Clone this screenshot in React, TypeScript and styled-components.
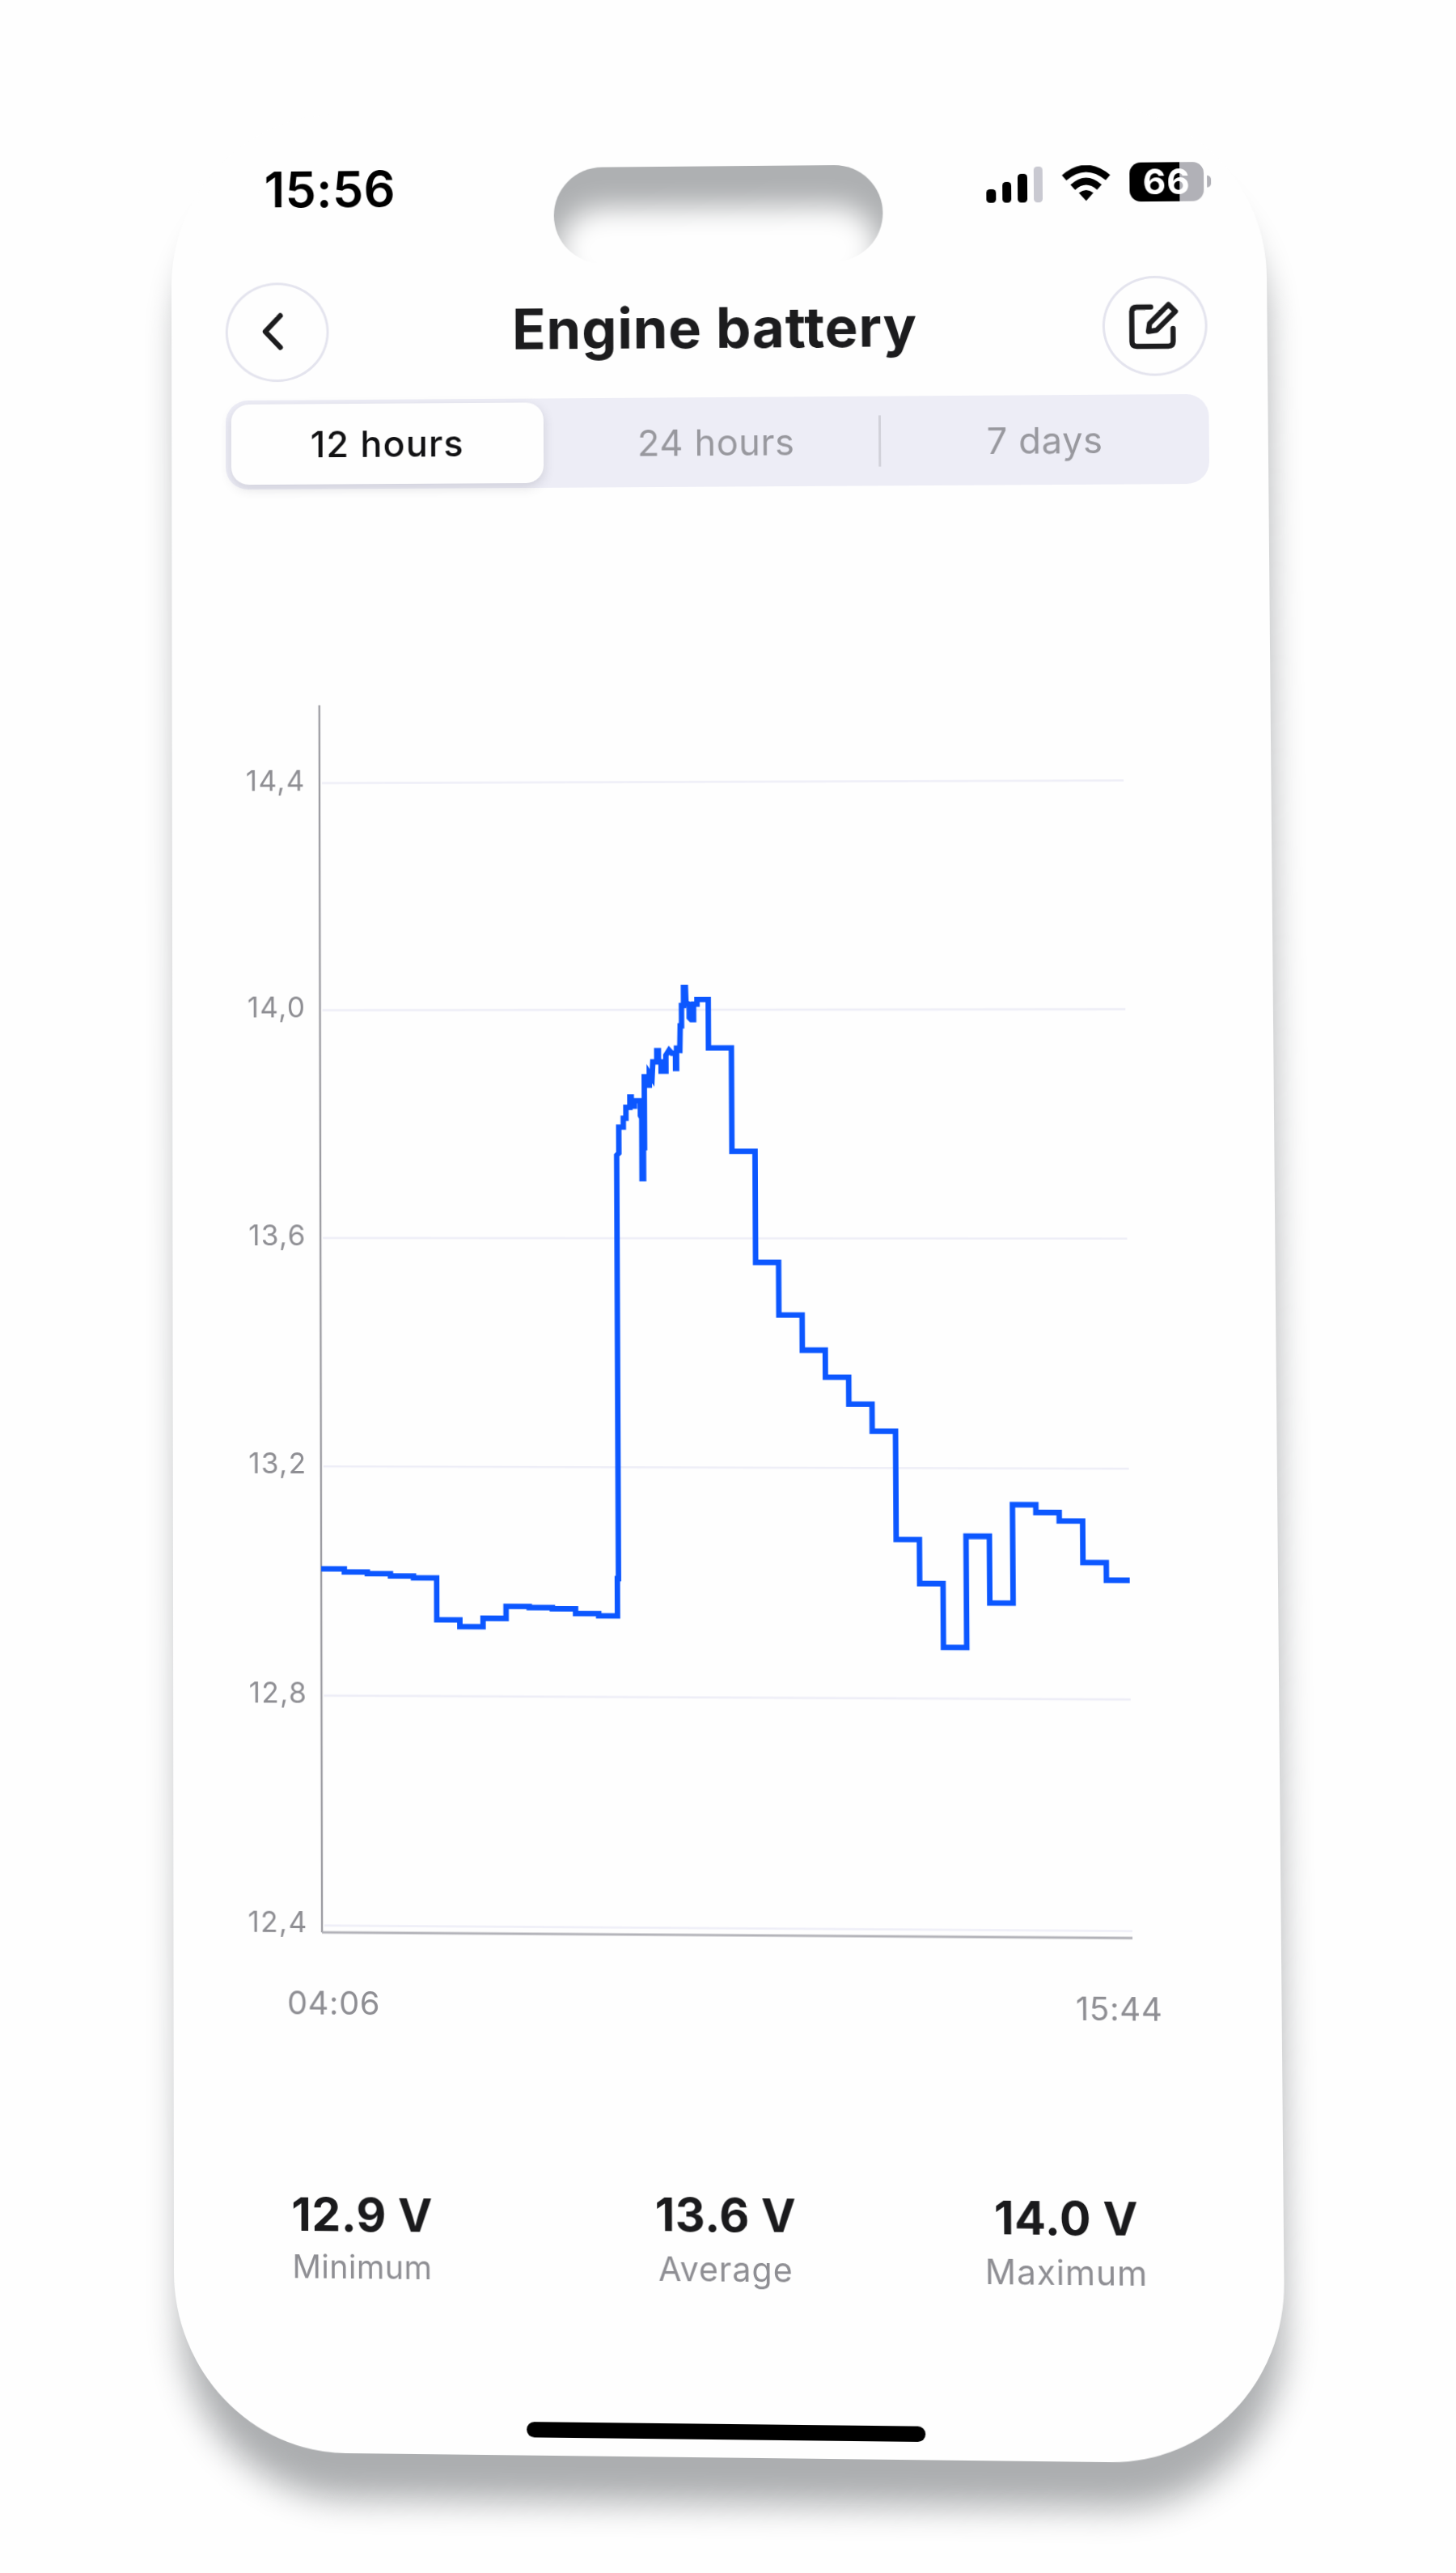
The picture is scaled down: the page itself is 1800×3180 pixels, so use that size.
import React from 'react';
import styled, { createGlobalStyle } from 'styled-components';

type Point = [number, number];

const SCREEN_WIDTH = 1368;
const SCREEN_HEIGHT = 2906;
const TILT_TOP = 360;

/* Page corners (clockwise from top left) of the screen area below TILT_TOP. */
const CORNERS: Point[] = [
  [212.2, 495.6],
  [1567.3, 486.4],
  [1589.4, 3045.6],
  [215.3, 3029.5],
];

function tiltMatrix(w: number, h: number, [p0, p1, p2, p3]: Point[]) {
  const dx1 = p1[0] - p2[0];
  const dy1 = p1[1] - p2[1];
  const dx2 = p3[0] - p2[0];
  const dy2 = p3[1] - p2[1];
  const sx = p0[0] - p1[0] + p2[0] - p3[0];
  const sy = p0[1] - p1[1] + p2[1] - p3[1];
  const det = dx1 * dy2 - dx2 * dy1;
  const g = (sx * dy2 - dx2 * sy) / det;
  const k = (dx1 * sy - sx * dy1) / det;
  const m = [
    (p1[0] - p0[0] + g * p1[0]) / w, (p1[1] - p0[1] + g * p1[1]) / w, 0, g / w,
    (p3[0] - p0[0] + k * p3[0]) / h, (p3[1] - p0[1] + k * p3[1]) / h, 0, k / h,
    0, 0, 1, 0,
    p0[0], p0[1], 0, 1,
  ];
  return `matrix3d(${m.map((n) => n.toFixed(12)).join(',')})`;
}

const TILT = tiltMatrix(SCREEN_WIDTH, SCREEN_HEIGHT - TILT_TOP, CORNERS);

const GlobalStyle = createGlobalStyle`
  body {
    margin: 0;
    background: #fefefe;
    font-family: Inter, 'Liberation Sans', sans-serif;
    -webkit-font-smoothing: antialiased;
  }
`;

const Page = styled.main`
  width: 1800px;
  height: 3180px;
  overflow: hidden;
  background: #fefefe;
`;

const Phone = styled.section`
  box-sizing: border-box;
  width: ${SCREEN_WIDTH}px;
  height: ${SCREEN_HEIGHT}px;
  display: flex;
  flex-direction: column;
  background: #fefefe;
  border-radius: 210px 210px 213px 213px / 215px 215px 220px 220px;
  box-shadow: 4px 61px 42px -5px #acaeb0;
  transform-origin: 0 0;
  transform: ${TILT} translateY(-${TILT_TOP}px);
`;

const StatusBar = styled.div`
  box-sizing: border-box;
  height: 212px;
  padding: 70px 77px 0 117px;
  display: grid;
  grid-template-columns: 1fr 411px 1fr;
  column-gap: 0;
  align-items: start;
`;

const Clock = styled.time`
  font-size: 62px;
  font-weight: 600;
  line-height: 50px;
  letter-spacing: 0.3px;
  color: #000;
`;

const Island = styled.div`
  height: 121px;
  margin-left: -18px;
  margin-right: 18px;
  border-radius: 61px;
  box-shadow: inset 0 45px 34px 6px #aeb0b2;
`;

const StatusIcons = styled.div`
  display: flex;
  align-items: flex-end;
  justify-content: flex-end;
  height: 49px;
`;

const Signal = styled.div`
  display: flex;
  align-items: flex-end;
  gap: 8px;
  margin-right: 23px;
`;

const SignalBar = styled.span<{ $height: number; $off?: boolean }>`
  width: 11.5px;
  height: ${(p) => p.$height}px;
  border-radius: 4.5px;
  background: ${(p) => (p.$off ? '#c9c9d1' : '#000')};
`;

const WifiIcon = styled.svg`
  width: 62px;
  height: 45px;
  margin-right: 23px;
  margin-bottom: 1px;
`;

const Battery = styled.div`
  width: 92px;
  height: 49px;
  border-radius: 14px;
  background: linear-gradient(90deg, #000 67%, #b1b1b7 67%);
  color: #fff;
  font-size: 44px;
  font-weight: 700;
  line-height: 49px;
  letter-spacing: 1px;
  text-align: center;
`;

const BatteryTip = styled.span`
  width: 5px;
  height: 15px;
  margin: 0 -9px 17px 4px;
  border-radius: 0 5px 5px 0;
  background: #b1b1b7;
`;

const Header = styled.header`
  display: flex;
  align-items: center;
  justify-content: space-between;
  height: 125px;
  padding: 0 74px 0 68px;
`;

const RoundButton = styled.button`
  box-sizing: border-box;
  width: 130px;
  height: 125px;
  padding: 0;
  border: 3px solid #e4e4ee;
  border-radius: 50%;
  background: transparent;
  display: flex;
  align-items: center;
  justify-content: center;
`;

const ButtonIcon = styled.svg`
  flex: none;
  overflow: visible;
  fill: none;
  stroke: #1c1c1e;
  stroke-width: 6.4;
  stroke-linecap: round;
  stroke-linejoin: round;
`;

const Title = styled.h1`
  margin: 0 0 4px;
  font-size: 69.5px;
  font-weight: 680;
  line-height: 80px;
  letter-spacing: 0.8px;
  color: #1c1c1e;
`;

const Tabs = styled.nav`
  box-sizing: border-box;
  height: 112px;
  margin: 23px 73px 0 68px;
  display: grid;
  grid-template-columns: repeat(3, 1fr);
  border-radius: 28px;
  background: #ededf6;
`;

const Tab = styled.button<{ $active?: boolean; $divided?: boolean }>`
  margin: ${(p) => (p.$active ? '5px 10px 6px 7px' : '0 -2px 0 0')};
  padding: 0;
  border: 0;
  border-radius: 22px;
  background: ${(p) =>
    p.$active
      ? '#fefefe'
      : p.$divided
        ? 'linear-gradient(#d1d1d9, #d1d1d9) right 0 center / 3px 64px no-repeat'
        : 'transparent'};
  box-shadow: ${(p) => (p.$active ? '0 5px 14px rgba(60, 60, 80, 0.17)' : 'none')};
  color: ${(p) => (p.$active ? '#111113' : '#98989e')};
  font-family: inherit;
  font-size: 45.5px;
  font-weight: ${(p) => (p.$active ? 520 : 400)};
  letter-spacing: ${(p) => (p.$active ? '1.2px' : '0.6px')};
`;

const ChartArea = styled.div`
  display: grid;
  grid-template-columns: 167.5px 1001px;
  column-gap: 17.5px;
  margin-top: 271px;
  height: 1524px;
`;

const VoltAxis = styled.div`
  display: flex;
  flex-direction: column;
  align-items: flex-end;
  padding-top: 72.5px;
`;

const VoltLabel = styled.span`
  height: 283.6px;
  line-height: 44px;
  font-size: 35.5px;
  letter-spacing: 1.4px;
  color: #8e8e93;
`;

const Plot = styled.svg`
  width: 1001px;
  height: 1524px;
  overflow: visible;
`;

const TimeRow = styled.div`
  display: flex;
  justify-content: space-between;
  margin-top: 62px;
  padding: 0 145.5px 0 141.5px;
  font-size: 40px;
  letter-spacing: 0.6px;
  line-height: 50px;
  color: #8e8e93;
`;

const Stats = styled.div`
  display: grid;
  grid-template-columns: 450px 449px 388px;
  height: 123px;
  margin-top: 198px;
  padding-left: 9px;
`;

const Stat = styled.div<{ $top: number; $gap: number }>`
  display: flex;
  flex-direction: column;
  align-items: center;
  gap: ${(p) => p.$gap}px;
  padding-top: ${(p) => p.$top}px;
`;

const StatValue = styled.strong`
  font-size: 57px;
  font-weight: 680;
  line-height: 66px;
  letter-spacing: 0.6px;
  color: #1a1a1c;
`;

const StatLabel = styled.span<{ $size: number; $tracking: number }>`
  font-size: ${(p) => p.$size}px;
  letter-spacing: ${(p) => p.$tracking}px;
  line-height: 48px;
  color: #8e8e93;
`;

const HomeIndicator = styled.div`
  width: 491px;
  height: 19.5px;
  margin: 164.5px auto 0;
  border-radius: 10px;
  background: #000;
  translate: -2px 0;
`;

/* Chart space: one sampling interval across, 0.4 V = 283.6 units down. */
const STEP = 28.75;
const VOLT = 709;
const LINE_144 = 97.5;
const TICKS = [14.4, 14.0, 13.6, 13.2, 12.8, 12.4];

const yOf = (volts: number) => LINE_144 + (14.4 - volts) * VOLT;

/* [interval at which the reading starts, volts] */
const BEFORE: Point[] = [
  [0, 13.021], [1, 13.016], [2, 13.013], [3, 13.009], [4, 13.006], [5, 12.933],
  [6, 12.9215], [7, 12.936], [8, 12.957], [9, 12.955], [10, 12.953], [11, 12.945],
  [12, 12.941], [12.81, 13.006], [12.86, 13.745],
];

const AFTER: Point[] = [
  [16.85, 13.933], [17.84, 13.752], [18.84, 13.558], [19.83, 13.466], [20.83, 13.405],
  [21.82, 13.358], [22.82, 13.311], [23.82, 13.264], [24.82, 13.0757], [25.82, 12.9995],
  [26.82, 12.889], [27.82, 13.082], [28.82, 12.966], [29.82, 13.137], [30.82, 13.1235],
  [31.82, 13.109], [32.82, 13.037], [33.82, 13.0065],
];

/* Dense readings while charging: thirds of a unit from 14.0 V and the first later step. */
const CHARGING: Point[] = [
  [-337, 534], [-337, 437], [-320, 437], [-320, 404], [-310, 404], [-310, 364], [-295, 364],
  [-295, 325], [-290, 325], [-290, 359], [-278, 359], [-278, 339], [-256, 339], [-256, 394],
  [-251, 404], [-251, 629], [-245, 629], [-245, 514], [-241, 514], [-241, 250], [-232, 250],
  [-232, 281], [-222, 281], [-222, 238], [-212, 254], [-209, 194], [-194, 194], [-194, 152],
  [-188, 152], [-188, 194], [-178, 194], [-178, 229], [-160, 229], [-160, 170], [-148, 151],
  [-138, 162], [-124, 162], [-124, 219], [-120, 219], [-120, 143], [-108, 143], [-108, 162],
  [-106, 60], [-101, 60], [-101, -16], [-93, -16], [-93, -83], [-86, -83], [-84, -26],
  [-72, -20], [-72, 29], [-65, 37], [-56, 37], [-56, -21], [-43, -21], [-43, -38],
];

function tracePath() {
  const parts: string[] = [`M0 ${yOf(BEFORE[0][1]).toFixed(1)}`];
  const step = ([at, volts]: Point) => {
    parts.push(`H${(at * STEP).toFixed(1)}V${yOf(volts).toFixed(1)}`);
  };
  BEFORE.forEach(step);
  CHARGING.forEach(([x, y]) => {
    parts.push(`L${(16.86 * STEP + x / 3).toFixed(1)} ${(yOf(14) + y / 3).toFixed(1)}`);
  });
  AFTER.forEach(step);
  parts.push('H1001');
  return parts.join('');
}

const TRACE = tracePath();

const TABS = ['12 hours', '24 hours', '7 days'];

const STATS = [
  { value: '12.9 V', label: 'Minimum', size: 39.5, tracking: 0.4, top: 4, gap: 7 },
  { value: '13.6 V', label: 'Average', size: 41, tracking: 1, top: 0, gap: 9 },
  { value: '14.0 V', label: 'Maximum', size: 42, tracking: 0.9, top: 0, gap: 9 },
];

export default function App() {
  return (
    <>
      <GlobalStyle />
      <Page>
        <Phone>
          <StatusBar>
            <Clock>15:56</Clock>
            <Island />
            <StatusIcons>
              <Signal>
                <SignalBar $height={17.5} />
                <SignalBar $height={26.5} />
                <SignalBar $height={36} />
                <SignalBar $height={45} $off />
              </Signal>
              <WifiIcon viewBox="0 0 62 45">
                <path d="M31 44.5L22 34.5Q31 27.5 40 34.5Z" />
                <path
                  d="M14.5 27.5Q31 12.5 47.5 27.5M3.8 15.5Q31 -7.5 58.2 15.5"
                  fill="none"
                  stroke="#000"
                  strokeWidth="8.6"
                />
              </WifiIcon>
              <Battery>66</Battery>
              <BatteryTip />
            </StatusIcons>
          </StatusBar>

          <Header>
            <RoundButton aria-label="Back">
              <ButtonIcon width="46" height="46" viewBox="-23 -23 46 46">
                <path d="M4 -21.5L-15 -1.5L4 18.5" />
              </ButtonIcon>
            </RoundButton>
            <Title>Engine battery</Title>
            <RoundButton aria-label="Edit">
              <ButtonIcon width="64" height="62" viewBox="0 2 64 62">
                <path d="M27 9H9.5Q3.5 9 3.5 15V52Q3.5 58 9.5 58H48.5Q54.5 58 54.5 52V36" />
                <path d="M24 39.5L25.5 29.5L49 6L57.5 14.8L34 38Z" />
              </ButtonIcon>
            </RoundButton>
          </Header>

          <Tabs>
            {TABS.map((name, i) => (
              <Tab key={name} $active={i === 0} $divided={i === 1}>
                {name}
              </Tab>
            ))}
          </Tabs>

          <ChartArea>
            <VoltAxis>
              {TICKS.map((tick) => (
                <VoltLabel key={tick}>{tick.toFixed(1).replace('.', ',')}</VoltLabel>
              ))}
            </VoltAxis>
            <Plot viewBox="0 0 1001 1524">
              {TICKS.map((tick) => (
                <line key={tick} x1="3" x2="1001" y1={yOf(tick)} y2={yOf(tick)} stroke="#eeeef7" strokeWidth="2.6" />
              ))}
              <path d="M0 0V1524" stroke="#9c9ca2" strokeWidth="2.4" />
              <path d="M0 1524H1001" stroke="#b2b2b8" strokeWidth="2.8" />
              <path d={TRACE} fill="none" stroke="#0c57ff" strokeWidth="6.8" />
            </Plot>
          </ChartArea>

          <TimeRow>
            <span>04:06</span>
            <span>15:44</span>
          </TimeRow>

          <Stats>
            {STATS.map((s) => (
              <Stat key={s.label} $top={s.top} $gap={s.gap}>
                <StatValue>{s.value}</StatValue>
                <StatLabel $size={s.size} $tracking={s.tracking}>
                  {s.label}
                </StatLabel>
              </Stat>
            ))}
          </Stats>

          <HomeIndicator />
        </Phone>
      </Page>
    </>
  );
}
